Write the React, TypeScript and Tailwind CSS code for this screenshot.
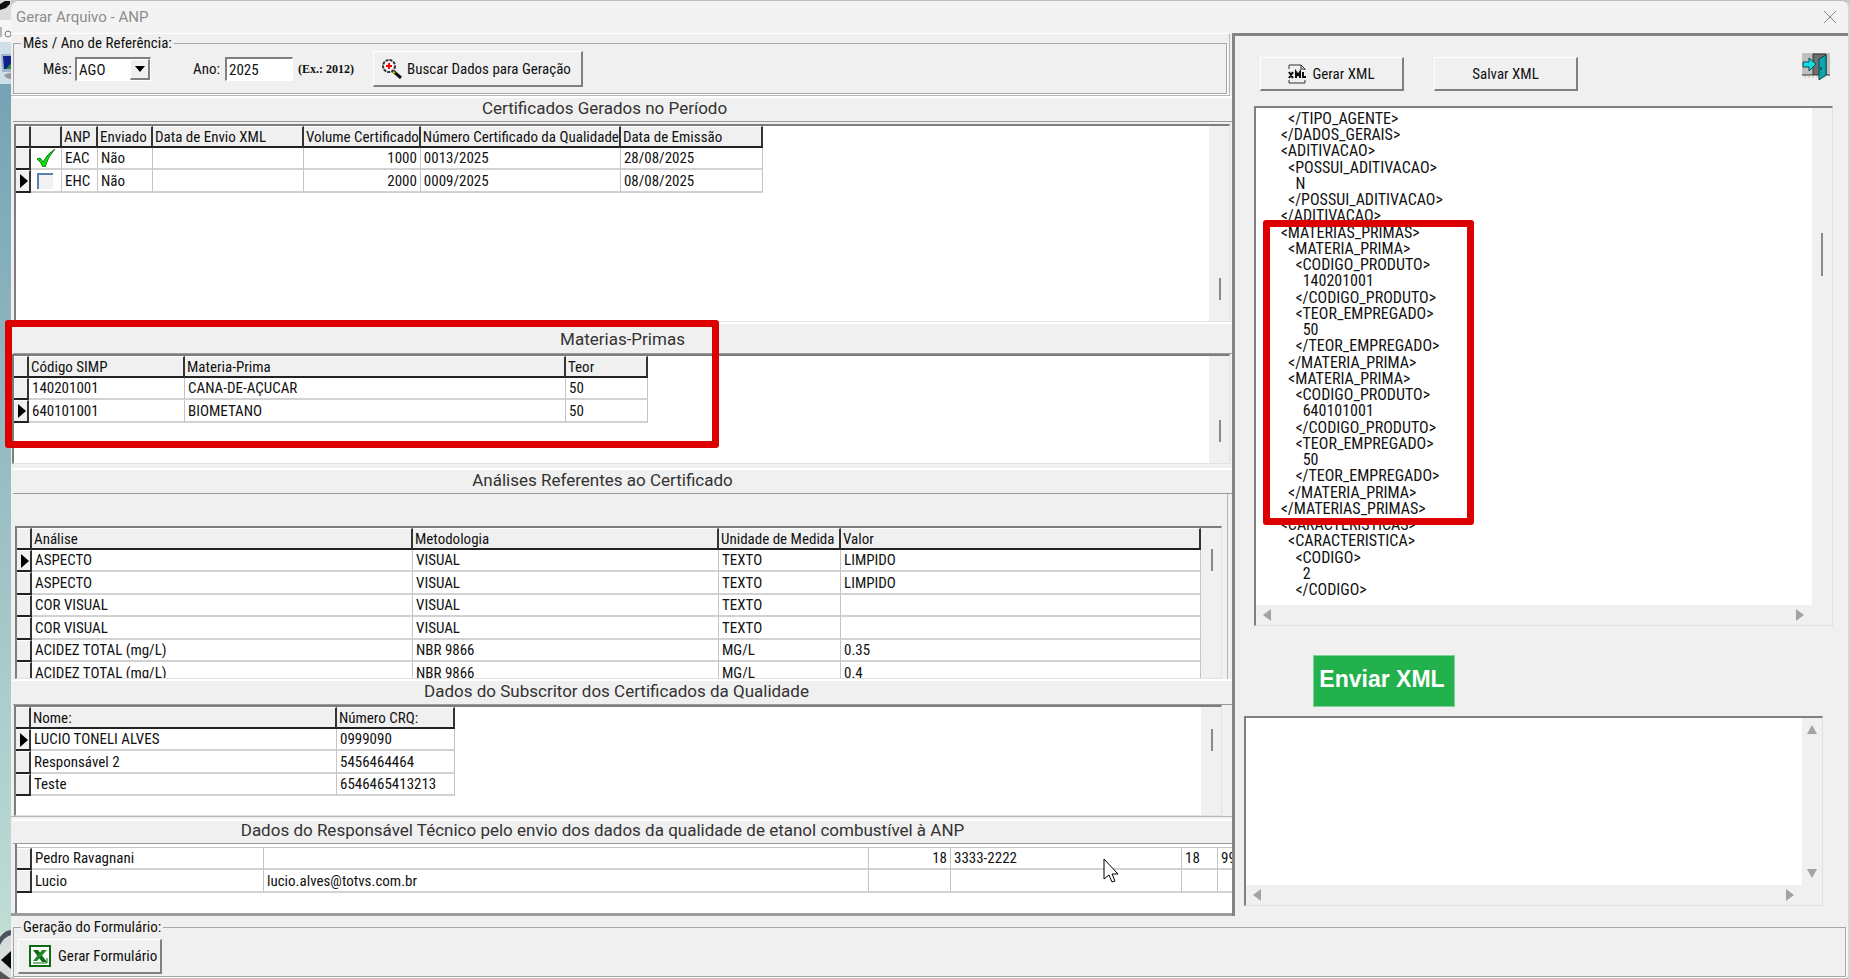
import type { ReactNode } from 'react';

type Align = 'left' | 'right';

interface Column {
  title: string;
  width: string;
  align?: Align;
}

const certificados: Column[] = [
  { title: '', width: 'w-[31px]' },
  { title: 'ANP', width: 'w-[36px]' },
  { title: 'Enviado', width: 'w-[55px]' },
  { title: 'Data de Envio XML', width: 'w-[151px]' },
  { title: 'Volume Certificado', width: 'w-[116px]', align: 'right' },
  { title: 'Número Certificado da Qualidade', width: 'w-[200px]' },
  { title: 'Data de Emissão', width: 'w-[142px]' },
];

const materias: Column[] = [
  { title: 'Código SIMP', width: 'w-[156px]' },
  { title: 'Materia-Prima', width: 'w-[381px]' },
  { title: 'Teor', width: 'w-[82px]' },
];

const analises: Column[] = [
  { title: 'Análise', width: 'w-[381px]' },
  { title: 'Metodologia', width: 'w-[306px]' },
  { title: 'Unidade de Medida', width: 'w-[122px]' },
  { title: 'Valor', width: 'w-[360px]' },
];

const subscritores: Column[] = [
  { title: 'Nome:', width: 'w-[306px]' },
  { title: 'Número CRQ:', width: 'w-[118px]' },
];

const responsaveis: Column[] = [
  { title: 'Nome', width: 'w-[232px]' },
  { title: 'E-mail', width: 'w-[605px]' },
  { title: 'DDD', width: 'w-[82px]', align: 'right' },
  { title: 'Telefone', width: 'w-[231px]' },
  { title: 'DDD', width: 'w-[36px]' },
  { title: 'Celular', width: 'w-[120px]' },
];

const xmlLines = [
  '      </TIPO_AGENTE>',
  '    </DADOS_GERAIS>',
  '    <ADITIVACAO>',
  '      <POSSUI_ADITIVACAO>',
  '        N',
  '      </POSSUI_ADITIVACAO>',
  '    </ADITIVACAO>',
  '    <MATERIAS_PRIMAS>',
  '      <MATERIA_PRIMA>',
  '        <CODIGO_PRODUTO>',
  '          140201001',
  '        </CODIGO_PRODUTO>',
  '        <TEOR_EMPREGADO>',
  '          50',
  '        </TEOR_EMPREGADO>',
  '      </MATERIA_PRIMA>',
  '      <MATERIA_PRIMA>',
  '        <CODIGO_PRODUTO>',
  '          640101001',
  '        </CODIGO_PRODUTO>',
  '        <TEOR_EMPREGADO>',
  '          50',
  '        </TEOR_EMPREGADO>',
  '      </MATERIA_PRIMA>',
  '    </MATERIAS_PRIMAS>',
  '    <CARACTERISTICAS>',
  '      <CARACTERISTICA>',
  '        <CODIGO>',
  '          2',
  '        </CODIGO>',
];

function SectionTitle({ children, className }: { children: ReactNode; className: string }) {
  return (
    <h2 className={`flex items-center justify-center border-t-2 border-b border-t-white border-b-[#9a9a9a] font-['Roboto'] text-[17px] leading-5 text-[#333] ${className}`}>
      {children}
    </h2>
  );
}

function DbGrid({ label, columns, rows, active, hideHeader }: {
  label: string;
  columns: Column[];
  rows: ReactNode[][];
  active?: number;
  hideHeader?: boolean;
}) {
  return (
    <table aria-label={label} className="w-max table-fixed border-separate border-spacing-0 text-left">
      {!hideHeader && (
        <thead>
          <tr className="h-[22px]">
            <th className="w-[15px] border-t border-r-2 border-b-2 border-t-white border-r-[#333] border-b-[#222] bg-[#f0f0f0] p-0" />
            {columns.map((c, i) => (
              <th
                key={i}
                className={`${c.width} overflow-hidden border-t border-r-2 border-b-2 border-t-white border-r-[#333] border-b-[#222] bg-[#f0f0f0] p-0 pl-[2px] font-normal whitespace-nowrap`}
              >
                {c.title}
              </th>
            ))}
          </tr>
        </thead>
      )}
      <tbody>
        {rows.map((row, r) => (
          <tr key={r} className="odd:h-[22px] even:h-[23px]">
            <td className="w-[15px] border-t border-r-2 border-b-2 border-t-white border-r-[#333] border-b-[#222] bg-[#f0f0f0] p-0">
              {active === r && (
                <svg viewBox="0 0 8 14" className="ml-1 h-[14px] w-2" aria-hidden="true">
                  <path d="M0 0l8 7-8 7z" fill="#000" />
                </svg>
              )}
            </td>
            {columns.map((c, i) => (
              <td
                key={i}
                className={`${c.width} overflow-hidden border-r border-b-2 border-r-[#c4c4c4] border-b-[#d2d2d2] p-0 px-[3px] whitespace-nowrap ${c.align === 'right' ? 'text-right' : ''}`}
              >
                {row[i]}
              </td>
            ))}
          </tr>
        ))}
      </tbody>
    </table>
  );
}

function GridPanel({ children, height, thumb, inset }: { children: ReactNode; height: string; thumb: string; inset: string }) {
  return (
    <div className={`flex border-t-2 border-l-2 border-t-[#7d7d7d] border-l-[#7d7d7d] border-r border-b border-r-[#e2e2e2] border-b-[#e2e2e2] bg-white ${height} ${inset}`}>
      <div className="min-w-0 flex-1 overflow-hidden">{children}</div>
      <div className="w-5 shrink-0 bg-[#f0f0f0]">
        <div className={`ml-[10px] w-[2px] bg-[#8a8a8a] ${thumb}`} />
      </div>
    </div>
  );
}

function Arrow({ dir }: { dir: 'left' | 'right' | 'up' | 'down' }) {
  const d = {
    left: 'M8 0v12L0 6z',
    right: 'M2 0v12l8-6z',
    up: 'M5 1l5 9H0z',
    down: 'M5 11l5-9H0z',
  }[dir];
  return (
    <svg viewBox="0 0 10 12" className="h-3 w-[10px]" aria-hidden="true">
      <path d={d} fill="#a3a3a3" />
    </svg>
  );
}

const bevel = 'border-t border-l border-r-2 border-b-2 border-t-white border-l-white border-r-[#808080] border-b-[#808080] bg-[#f0f0f0]';
const sunken = 'border-t-2 border-l-2 border-r border-b border-t-[#808080] border-l-[#808080] border-r-white border-b-white bg-white';

export default function App() {
  return (
    <div className="flex min-h-screen bg-[#c9c9c9] font-['Roboto_Condensed','Roboto',sans-serif] text-[15px] leading-[18px] text-[#111]">
      {/* slice of the desktop behind the window */}
      <div className="flex w-[11px] shrink-0 flex-col overflow-hidden bg-linear-to-b from-[#6f9db1] to-[#c3e0d6]">
        <svg viewBox="0 0 11 84" className="h-[84px] w-[11px]" aria-hidden="true">
          <path d="M0 0h11v20H0z" fill="#dcdcdc" />
          <path d="M0 4l5-3h5v3L6 8l-6 2z" fill="#111" />
          <path d="M0 20h11v22H0z" fill="#f6f6f6" />
          <path d="M1 27v10" stroke="#777" strokeWidth="1" />
          <circle cx="8" cy="34" r="3" stroke="#777" strokeWidth="1" fill="none" />
          <path d="M0 42h11v42H0z" fill="#cfdfe9" />
          <path d="M1 54h10v18H2z" fill="#9fb4c8" />
          <path d="M3 56h8v13H4z" fill="#10238c" />
          <path d="M6 69l5-6v6z" fill="#2f8a4a" />
          <path d="M4 75q3-2 7-2v6q-5 0-7-4z" fill="#999" />
        </svg>
        <div className="flex-1" />
        <svg viewBox="0 0 11 50" className="h-[50px] w-[11px]" aria-hidden="true">
          <path d="M0 4l11-4v50H0z" fill="#d7dcdc" />
          <path d="M0 8Q5 1 11 1v5Q4 8 0 16z" fill="#4b5560" />
          <path d="M11 22v18L1 31z" fill="#080808" />
          <path d="M0 42l11 8H0z" fill="#555" />
        </svg>
      </div>

      <div className="flex min-w-0 flex-1 flex-col rounded-t-lg border-t border-r-2 border-t-[#bdbdbd] border-r-[#d8d8d8] bg-[#f0f0f0]">
        <header className="flex h-8 items-center justify-between rounded-t-lg bg-[#f3f3f3] pr-3 pl-[5px] font-['Roboto'] text-[#8c8c8c]">
          <h1>Gerar Arquivo - ANP</h1>
          <button type="button" aria-label="Fechar">
            <svg viewBox="0 0 12 12" className="h-3 w-3" aria-hidden="true">
              <path d="M0 0l12 12M12 0L0 12" stroke="#888" strokeWidth="1" fill="none" />
            </svg>
          </button>
        </header>

        <main className="flex min-w-0">
          <div className="min-w-0 flex-1">
            <div className="mr-[2px] h-[63px] border-t border-r border-b border-t-white border-r-[#b5b5b5] border-b-[#b5b5b5]">
              <fieldset className="mr-[2px] ml-[2px] h-[60px] border border-[#a6a6a6] pl-[29px] shadow-[1px_1px_0_white]">
                <legend className="-ml-[22px] px-[2px]">Mês / Ano de Referência:</legend>
                <div className="flex h-[34px] items-center">
                  <label htmlFor="mes" className="w-8">Mês:</label>
                  <div className={`relative flex h-6 w-[76px] ${sunken}`}>
                    <select id="mes" defaultValue="AGO" className="w-full appearance-none bg-transparent pl-[2px] outline-none">
                      <option>AGO</option>
                    </select>
                    <span className={`pointer-events-none absolute inset-y-0 right-0 flex w-5 items-center justify-center ${bevel}`}>
                      <svg viewBox="0 0 10 6" className="h-[6px] w-[10px]" aria-hidden="true">
                        <path d="M0 0h10L5 6z" fill="#000" />
                      </svg>
                    </span>
                  </div>
                  <label htmlFor="ano" className="ml-[42px] w-8">Ano:</label>
                  <input id="ano" defaultValue="2025" className={`h-6 w-[68px] px-[2px] outline-none ${sunken}`} />
                  <span className="ml-[5px] w-[75px] font-['Liberation_Serif'] text-xs font-semibold whitespace-nowrap">(Ex.: 2012)</span>
                  <button type="button" className={`flex h-9 w-[210px] items-center gap-[5px] pl-[7px] whitespace-nowrap ${bevel}`}>
                    <svg viewBox="0 0 21 20" className="h-5 w-[21px]" aria-hidden="true">
                      <path d="M12 12l8 7" stroke="#111" strokeWidth="3" />
                      <path d="M11 12l3 2" stroke="#c8c800" strokeWidth="2" />
                      <circle cx="8" cy="7" r="6" fill="#f4f4f4" stroke="#333" strokeWidth="2" strokeDasharray="3 1" />
                      <path d="M8 4v6M5 7h6" stroke="#f00" strokeWidth="2" />
                    </svg>
                    Buscar Dados para Geração
                  </button>
                </div>
              </fieldset>
            </div>

            <section>
              <SectionTitle className="ml-[2px] h-[26px] pr-9 pb-1">Certificados Gerados no Período</SectionTitle>
              <GridPanel height="h-[198px]" thumb="mt-[152px] h-[22px]" inset="mt-[2px] ml-[3px] mr-[2px]">
                <DbGrid
                  label="Certificados Gerados no Período"
                  columns={certificados}
                  active={1}
                  rows={[
                    [
                      <svg key="on" viewBox="0 0 20 18" className="ml-[2px] h-[18px] w-5" aria-label="Selecionado">
                        <path d="M1 10l3-1 3 4Q11 5 19 0q-7 7-10 18H7Q5 13 1 10z" fill="#0ce00c" stroke="#067a06" strokeWidth="1" />
                      </svg>,
                      'EAC', 'Não', '', '1000', '0013/2025', '28/08/2025',
                    ],
                    [
                      <input
                        key="off"
                        type="checkbox"
                        aria-label="Selecionar EHC"
                        className="ml-[3px] block h-4 w-4 appearance-none border-t-2 border-l-2 border-[#5a7fb0] bg-[#f2f2f5]"
                      />,
                      'EHC', 'Não', '', '2000', '0009/2025', '08/08/2025',
                    ],
                  ]}
                />
              </GridPanel>
            </section>

            <section className="relative">
              <SectionTitle className="ml-[2px] h-8">Materias-Primas</SectionTitle>
              <GridPanel height="h-[110px]" thumb="mt-[64px] h-[22px]" inset="ml-[1px] mr-[2px]">
                <DbGrid
                  label="Materias-Primas"
                  columns={materias}
                  active={1}
                  rows={[
                    ['140201001', 'CANA-DE-AÇUCAR', '50'],
                    ['640101001', 'BIOMETANO', '50'],
                  ]}
                />
              </GridPanel>
              <div className="pointer-events-none absolute -top-[2px] -left-[6px] h-[128px] w-[714px] rounded-[3px] border-[7px] border-[#dc0000]" />
            </section>

            <section>
              <SectionTitle className="mt-1 ml-[2px] h-[26px] pr-10 pb-1">Análises Referentes ao Certificado</SectionTitle>
              <div className="mr-1 border-r border-[#b5b5b5] pt-8">
                <GridPanel height="h-[153px]" thumb="mt-[21px] h-[22px]" inset="ml-1 mr-[5px]">
                  <DbGrid
                    label="Análises Referentes ao Certificado"
                    columns={analises}
                    active={0}
                    rows={[
                      ['ASPECTO', 'VISUAL', 'TEXTO', 'LIMPIDO'],
                      ['ASPECTO', 'VISUAL', 'TEXTO', 'LIMPIDO'],
                      ['COR VISUAL', 'VISUAL', 'TEXTO', ''],
                      ['COR VISUAL', 'VISUAL', 'TEXTO', ''],
                      ['ACIDEZ TOTAL (mg/L)', 'NBR 9866', 'MG/L', '0.35'],
                      ['ACIDEZ TOTAL (mg/L)', 'NBR 9866', 'MG/L', '0.4'],
                    ]}
                  />
                </GridPanel>
              </div>
            </section>

            <section>
              <SectionTitle className="ml-[2px] h-[26px] pr-3 pb-1">Dados do Subscritor dos Certificados da Qualidade</SectionTitle>
              <GridPanel height="h-[111px]" thumb="mt-[22px] h-[22px]" inset="ml-[3px] mr-[10px]">
                <DbGrid
                  label="Dados do Subscritor"
                  columns={subscritores}
                  active={0}
                  rows={[
                    ['LUCIO TONELI ALVES', '0999090'],
                    ['Responsável 2', '5456464464'],
                    ['Teste', '6546465413213'],
                  ]}
                />
              </GridPanel>
            </section>

            <section className="border-t border-b-[3px] border-t-[#b5b5b5] border-b-[#999d9d]">
              <SectionTitle className="mt-[2px] ml-[2px] h-[25px] pr-10 pb-1">
                Dados do Responsável Técnico pelo envio dos dados da qualidade de etanol combustível à ANP
              </SectionTitle>
              <div className="ml-1 h-[69px] overflow-hidden border-l-2 border-[#7d7d7d] bg-white">
                <div className="h-1 border-b border-[#c4c4c4]" />
                <DbGrid
                  label="Responsável Técnico"
                  columns={responsaveis}
                  hideHeader
                  rows={[
                    ['Pedro Ravagnani', '', '18', '3333-2222', '18', '99999-9999'],
                    ['Lucio', 'lucio.alves@totvs.com.br', '', '', '', ''],
                  ]}
                />
              </div>
            </section>
          </div>

          <aside className="flex w-[616px] shrink-0 flex-col border-t-[3px] border-l-[3px] border-[#848484]">
            <div className="flex items-start pt-[21px] pr-[18px] pl-[25px]">
              <button type="button" className={`flex h-[34px] w-36 items-center justify-center gap-[6px] ${bevel}`}>
                <svg viewBox="0 0 18 20" className="h-5 w-[18px]" aria-hidden="true">
                  <path d="M1 5V1h12l4 4v1M13 1v4h4M1 16v3h16v-3" stroke="#333" strokeWidth="1" fill="none" />
                  <path d="M1 8l4 6M5 8l-4 6M8 14V8l2 3 2-3v6M15 8v5h3" stroke="#111" strokeWidth="2" fill="none" />
                </svg>
                Gerar XML
              </button>
              <button type="button" className={`ml-[30px] h-[34px] w-36 ${bevel}`}>Salvar XML</button>
              <button type="button" aria-label="Sair" className="-mt-1 ml-auto">
                <svg viewBox="0 0 28 28" className="h-7 w-7" aria-hidden="true">
                  <path d="M0 0h28v22H0z" fill="#c0c0c0" />
                  <path d="M11 1h13v21H11z" fill="#707070" stroke="#333" strokeWidth="1" />
                  <path d="M0 22h11M24 22h4" stroke="#333" strokeWidth="1" />
                  <path d="M2 24h24" stroke="#bbb" strokeWidth="1" strokeDasharray="2 2" />
                  <path d="M1 9h6V5l7 6-7 7v-4H1z" fill="#19dbe4" stroke="#064a52" strokeWidth="1" />
                  <path d="M17 6l7-4v20l-7 5z" fill="#0fa6ac" stroke="#04464b" strokeWidth="1" />
                  <path d="M19 14v3" stroke="#022" strokeWidth="1" />
                </svg>
              </button>
            </div>

            <div className="relative mt-[15px] mr-[15px] ml-[19px] flex h-[520px] flex-col border-t-2 border-l-2 border-r border-b border-t-[#808080] border-l-[#808080] border-r-[#e0e0e0] border-b-[#e0e0e0]">
              <div className="flex min-h-0 flex-1">
                <pre className="min-w-0 flex-1 overflow-hidden bg-white pt-[3px] pl-[10px] font-['Roboto_Condensed','Roboto',sans-serif] text-base leading-4">
                  {xmlLines.map((line, i) => (
                    <code key={i} className="block font-['Roboto_Condensed','Roboto',sans-serif] leading-[16px] nth-[4n]:leading-[17px]">{line}</code>
                  ))}
                </pre>
                <div className="w-5">
                  <div className="mt-[125px] ml-[9px] h-[43px] w-[2px] bg-[#8a8a8a]" />
                </div>
              </div>
              <div className="flex h-5 items-center justify-between pr-7 pl-[7px]">
                <Arrow dir="left" />
                <Arrow dir="right" />
              </div>
              <div className="pointer-events-none absolute top-[112px] left-[7px] h-[305px] w-[211px] rounded-[3px] border-[7px] border-[#dc0000]" />
            </div>

            <button type="button" className="mt-[29px] ml-[78px] h-[52px] w-[142px] border border-[#7fd39a] bg-[#22b14c] pr-1 pb-1 font-['Liberation_Sans'] text-[23px] font-bold whitespace-nowrap text-white">
              Enviar XML
            </button>

            <div className="mt-[9px] mr-[25px] ml-[9px] flex h-[190px] flex-col border-t-2 border-l-2 border-r border-b border-t-[#808080] border-l-[#808080] border-r-[#e0e0e0] border-b-[#e0e0e0]">
              <div className="flex min-h-0 flex-1">
                <textarea aria-label="Retorno do envio" className="min-w-0 flex-1 resize-none bg-white outline-none" />
                <div className="flex w-5 flex-col items-center justify-between py-[6px]">
                  <Arrow dir="up" />
                  <Arrow dir="down" />
                </div>
              </div>
              <div className="flex h-5 items-center justify-between pr-7 pl-[7px]">
                <Arrow dir="left" />
                <Arrow dir="right" />
              </div>
            </div>
          </aside>
        </main>

        <footer className="mt-[2px] border-b-2 border-[#bdbdbd] pr-[2px] pl-[2px]">
          <fieldset className="h-[59px] border border-[#a6a6a6] pl-1 shadow-[1px_1px_0_white]">
            <legend className="ml-[3px] px-[2px]">Geração do Formulário:</legend>
            <button type="button" className={`mt-[3px] flex h-[35px] w-36 items-center gap-[7px] pl-[10px] whitespace-nowrap ${bevel}`}>
              <svg viewBox="0 0 22 22" className="h-[22px] w-[22px]" aria-hidden="true">
                <path d="M1 1h20v20H1z" fill="#fff" stroke="#0b6b12" strokeWidth="2" />
                <path d="M4 5h5l9 12h-5z" fill="#0b6b12" />
                <path d="M13 5h5L8 16H4z" fill="#1f8a28" />
                <path d="M4 18h14v-5" stroke="#0b6b12" strokeWidth="1" fill="none" />
              </svg>
              Gerar Formulário
            </button>
          </fieldset>
        </footer>
      </div>

      <svg viewBox="0 0 16 26" className="pointer-events-none absolute top-[858px] left-[1103px] h-[26px] w-4" aria-hidden="true">
        <path d="M1 1v20l5-4 3 7 3-1-3-7h6z" fill="#fff" stroke="#000" strokeWidth="1" />
      </svg>
    </div>
  );
}
